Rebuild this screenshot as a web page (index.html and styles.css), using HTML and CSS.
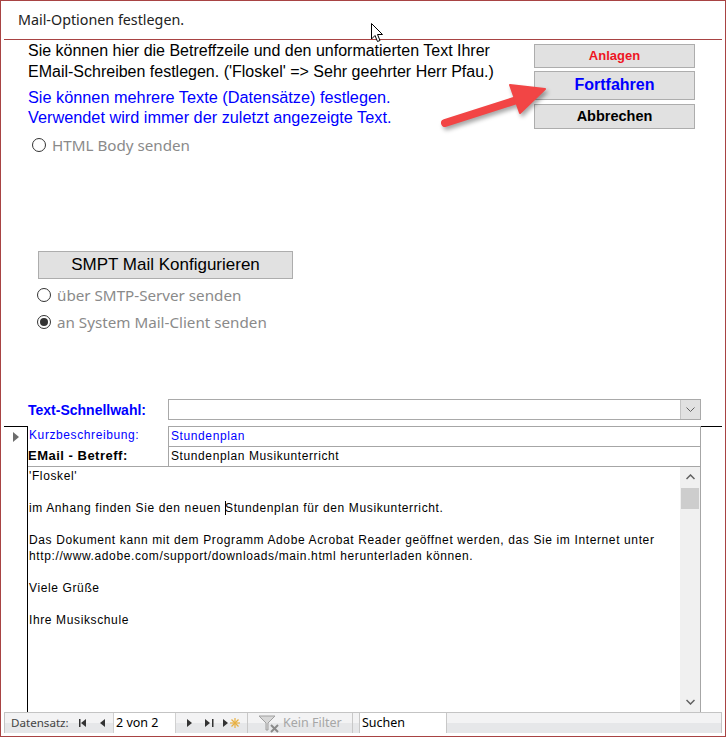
FILE: index.html
```html
<!DOCTYPE html>
<html lang="de">
<head>
    <meta charset="UTF-8">
    <title>Mail-Optionen festlegen</title>
    <link rel="stylesheet" href="styles.css">
</head>
<body>

<div class="window">
    <div class="title">Mail-Optionen festlegen.</div>

    <div class="top">
        <div class="intro">
            <p class="hint">Sie können hier die Betreffzeile und den unformatierten Text Ihrer<br>EMail-Schreiben festlegen. ('Floskel' =&gt; Sehr geehrter Herr Pfau.)</p>
            <p class="multi">Sie können mehrere Texte (Datensätze) festlegen.<br>Verwendet wird immer der zuletzt angezeigte Text.</p>
            <div class="radio radio-html"><span class="dot"></span>HTML Body senden</div>
        </div>
        <div class="actions">
            <button class="btn btn-anlagen">Anlagen</button>
            <button class="btn btn-fortfahren">Fortfahren</button>
            <button class="btn btn-abbrechen">Abbrechen</button>
        </div>
    </div>

    <div class="smtp">
        <button class="btn btn-smtp">SMPT Mail Konfigurieren</button>
        <div class="radio radio-smtp"><span class="dot"></span>über SMTP-Server senden</div>
        <div class="radio radio-client"><span class="dot on"></span>an System Mail-Client senden</div>
    </div>

    <div class="quick">
        <span class="quick-label">Text-Schnellwahl:</span>
        <div class="combo">
            <span class="combo-btn">
                <svg width="9" height="5" viewBox="0 0 9 5"><polyline points="0.5,0.5 4.5,4.5 8.5,0.5" fill="none" stroke="#606060" stroke-width="1"/></svg>
            </span>
        </div>
    </div>

    <div class="record">
        <div class="selector"><span class="pointer"></span></div>
        <div class="fields">
            <div class="field">
                <span class="field-label">Kurzbeschreibung:</span>
                <div class="field-box blue">Stundenplan</div>
            </div>
            <div class="field field-second">
                <span class="field-label bold">EMail - Betreff:</span>
                <div class="field-box">Stundenplan Musikunterricht</div>
            </div>
            <div class="memo">
                <div class="memo-text">
                    'Floskel'<br>
                    <br>
                    im Anhang finden Sie den neuen <span class="caret"></span>Stundenplan für den Musikunterricht.<br>
                    <br>
                    Das Dokument kann mit dem Programm Adobe Acrobat Reader geöffnet werden, das Sie im Internet unter<br>
                    http://www.adobe.com/support/downloads/main.html herunterladen können.<br>
                    <br>
                    Viele Grüße<br>
                    <br>
                    Ihre Musikschule
                </div>
                <div class="scrollbar">
                    <span class="scroll-arrow">
                        <svg width="9" height="6" viewBox="0 0 9 6"><polyline points="0.5,5 4.5,1 8.5,5" fill="none" stroke="#606060" stroke-width="1.5"/></svg>
                    </span>
                    <span class="thumb"></span>
                    <span class="scroll-space"></span>
                    <span class="scroll-arrow">
                        <svg width="9" height="6" viewBox="0 0 9 6"><polyline points="0.5,1 4.5,5 8.5,1" fill="none" stroke="#606060" stroke-width="1.5"/></svg>
                    </span>
                </div>
            </div>
        </div>
        <div class="tail"></div>
    </div>

    <div class="navbar">
        <span class="nav-label">Datensatz:</span>
        <svg class="nav-icons" width="38" height="20" viewBox="0 0 38 20">
            <rect x="4" y="6" width="1.5" height="8" fill="#333"/>
            <polygon points="11,6 11,14 6,10" fill="#333"/>
            <polygon points="30,6 30,14 25,10" fill="#333"/>
        </svg>
        <span class="nav-input">2 von 2</span>
        <svg class="nav-icons" width="71" height="20" viewBox="0 0 71 20">
            <polygon points="11,6 11,14 16,10" fill="#333"/>
            <polygon points="29,6 29,14 34,10" fill="#333"/>
            <rect x="36" y="6" width="1.5" height="8" fill="#333"/>
            <polygon points="47,6 47,14 52,10" fill="#333"/>
            <g stroke="#e8b040" stroke-width="1.2">
                <line x1="59" y1="5" x2="59" y2="15"/>
                <line x1="54" y1="10" x2="64" y2="10"/>
                <line x1="55.5" y1="6.5" x2="62.5" y2="13.5"/>
                <line x1="62.5" y1="6.5" x2="55.5" y2="13.5"/>
            </g>
        </svg>
        <span class="nav-filter">
            <svg width="22" height="20" viewBox="0 0 22 20">
                <polygon points="1,3 17,3 10,10 10,17 8,17 8,10" fill="#d8d8d8" stroke="#a0a0a0" stroke-width="1"/>
                <g stroke="#8a8a8a" stroke-width="2">
                    <line x1="13" y1="12" x2="20" y2="19"/>
                    <line x1="20" y1="12" x2="13" y2="19"/>
                </g>
            </svg>
            Kein Filter
        </span>
        <span class="nav-search">Suchen</span>
        <span class="nav-rest"></span>
    </div>

    <svg class="red-arrow" width="120" height="55" viewBox="0 0 120 55">
        <line x1="9" y1="45" x2="84" y2="21" stroke="#f24545" stroke-width="8" stroke-linecap="round"/>
        <polygon points="109,11 74,7 84,35" fill="#f24545" stroke="#f24545" stroke-width="2" stroke-linejoin="round"/>
    </svg>

    <svg class="mouse" width="13" height="20" viewBox="0 0 13 20">
        <path d="M0.5,0.5 L0.5,16 L4,12.5 L6.5,18.5 L9,17.5 L6.5,11.5 L11.5,11.5 Z" fill="#fff" stroke="#000" stroke-width="1"/>
    </svg>
</div>

</body>
</html>
```

FILE: styles.css
```css
* {margin: 0; padding: 0; box-sizing: border-box;}

body {
    background: #fff;
    font-family: "Liberation Sans", Arial, sans-serif;
}

.window {
    position: relative;
    width: 726px;
    height: 737px;
    border: 1px solid #a84343;
    background: #fff;
    overflow: hidden;
}

.title {
    height: 39px;
    margin: 0 3px;
    padding-left: 14px;
    border-bottom: 1px solid #a84343;
    font: 14.3px/38px "Noto Sans", sans-serif;
    color: #222;
}

/* oberer Bereich */
.top {
    display: flex;
    height: 120px;
}

.intro {
    flex: 1;
    padding-left: 27px;
}

.hint {
    font-size: 16px;
    line-height: 21px;
    color: #000;
}

.multi {
    margin-top: 5px;
    font-size: 16.3px;
    line-height: 20px;
    color: #0000ff;
}

.radio {
    display: flex;
    align-items: center;
    gap: 6px;
    height: 20px;
    font: 15.2px "Noto Sans", sans-serif;
    color: #8a8a8a;
}

.radio-html { margin: 8px 0 0 4px; }

.dot {
    width: 14px;
    height: 14px;
    border: 1px solid #333;
    border-radius: 50%;
    display: flex;
    align-items: center;
    justify-content: center;
}

.dot.on::after {
    content: "";
    width: 8px;
    height: 8px;
    border-radius: 50%;
    background: #333;
}

.actions {
    width: 161px;
    margin: 4px 30px 0 0;
    display: flex;
    flex-direction: column;
}

.btn {
    background: #e1e1e1;
    border: 1px solid #adadad;
    font-family: "Liberation Sans", Arial, sans-serif;
    font-weight: bold;
    cursor: default;
}

.btn-anlagen { height: 24px; padding-bottom: 1px; font-size: 13px; color: #ee1423; }
.btn-fortfahren { height: 29px; margin-top: 3px; padding-bottom: 1px; font-size: 16px; color: #0000ff; }
.btn-abbrechen { height: 25px; margin-top: 4px; padding-bottom: 1px; font-size: 14.5px; color: #000; }

/* SMTP */
.smtp {
    margin-top: 91px;
    padding-left: 36px;
}

.btn-smtp {
    display: block;
    margin-left: 1px;
    width: 255px;
    height: 28px;
    font-size: 17px;
    font-weight: normal;
    color: #000;
}

.radio-smtp { margin-top: 6px; }
.radio-client { margin-top: 7px; }

/* Schnellwahl */
.quick {
    display: flex;
    align-items: center;
    height: 21px;
    margin-top: 67px;
    padding-left: 27px;
}

.quick-label {
    width: 140px;
    font-size: 14px;
    font-weight: bold;
    color: #0000ff;
}

.combo {
    width: 533px;
    height: 21px;
    border: 1px solid #a9a9a9;
    display: flex;
    justify-content: flex-end;
}

.combo-btn {
    width: 20px;
    height: 19px;
    background: #e1e1e1;
    border-left: 1px solid #c4c4c4;
    display: flex;
    align-items: center;
    justify-content: center;
}

/* Datensatz */
.record {
    display: flex;
    height: 286px;
    margin: 6px 3px 0;
}

.selector {
    width: 24px;
    border-top: 1px solid #000;
    border-right: 1px solid #000;
    padding: 5px 0 0 9px;
}

.pointer {
    display: block;
    width: 0;
    height: 0;
    border-left: 6px solid #6d6d6d;
    border-top: 5px solid transparent;
    border-bottom: 5px solid transparent;
}

.fields {
    width: 673px;
    display: flex;
    flex-direction: column;
}

.tail {
    flex: 1;
    border-top: 1px solid #000;
}

.field {
    display: flex;
    height: 21px;
}

.field-second { margin-top: -1px; }

.field-label {
    width: 140px;
    padding-left: 1px;
    font-size: 12px;
    line-height: 19px;
    letter-spacing: 0.6px;
    color: #0000ff;
}

.field-label.bold {
    padding-left: 0;
    font-size: 13px;
    font-weight: bold;
    letter-spacing: 0.5px;
    color: #000;
}

.field-box {
    flex: 1;
    border: 1px solid #a6a6a6;
    padding-left: 2px;
    font-size: 12px;
    line-height: 19px;
    letter-spacing: 0.6px;
    color: #000;
}

.field-box.blue { color: #0000ff; }

.memo {
    flex: 1;
    display: flex;
    margin-top: -1px;
    border-top: 1px solid #a6a6a6;
    border-right: 1px solid #a6a6a6;
}

.memo-text {
    flex: 1;
    padding: 1px 0 0 1px;
    font-size: 12px;
    line-height: 16px;
    letter-spacing: 0.62px;
    color: #000;
}

.caret {
    display: inline-block;
    width: 0;
    height: 14px;
    margin-right: -1px;
    border-left: 1px solid #000;
    vertical-align: -3px;
}

.scrollbar {
    width: 20px;
    background: #f0f0f0;
    display: flex;
    flex-direction: column;
}

.scroll-arrow {
    height: 20px;
    display: flex;
    align-items: center;
    justify-content: center;
}

.thumb {
    height: 21px;
    margin: 1px 1px 0;
    background: #cdcdcd;
}

.scroll-space { flex: 1; }

/* Navigationsleiste */
.navbar {
    display: flex;
    height: 21px;
    margin: 0 3px;
    border: 1px solid #c4c4c4;
    border-bottom: none;
    background: linear-gradient(#f3f3f4 50%, #e6e7e9 50%);
    font: 12.5px/20px "Noto Sans", sans-serif;
    color: #444;
}

.nav-label {
    width: 70px;
    padding-left: 6px;
    font-size: 11.6px;
}

.nav-input {
    width: 63px;
    padding-left: 2px;
    background: #fff;
    border-left: 1px solid #d0d0d0;
    border-right: 1px solid #d0d0d0;
    font-size: 12.5px;
    color: #000;
}

.nav-filter {
    display: flex;
    align-items: center;
    gap: 3px;
    width: 106px;
    padding-left: 10px;
    border-left: 1px solid #c8c8c8;
    border-right: 1px solid #c8c8c8;
    color: #a6a6a6;
}

.nav-search {
    width: 88px;
    margin-left: 6px;
    padding-left: 2px;
    background: #fff;
    border-left: 1px solid #c8c8c8;
    border-right: 1px solid #c8c8c8;
    font-size: 12.5px;
    color: #000;
}

.nav-rest { flex: 1; }

/* Overlay */
.red-arrow {
    position: absolute;
    left: 435px;
    top: 77px;
    filter: drop-shadow(2px 3px 2px rgba(0,0,0,0.35));
}

.mouse {
    position: absolute;
    left: 370px;
    top: 22px;
}
```
